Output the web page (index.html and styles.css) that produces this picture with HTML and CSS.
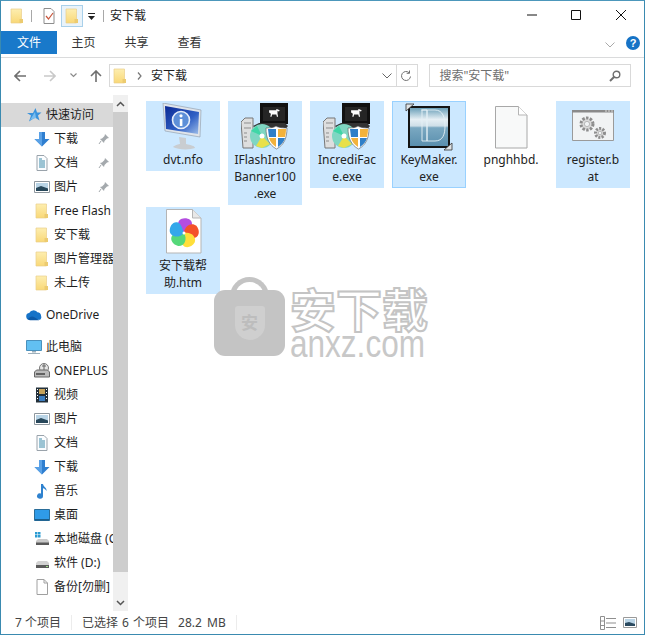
FILE: index.html
```html
<!DOCTYPE html>
<html lang="zh">
<head>
<meta charset="utf-8">
<title>安下载</title>
<link rel="stylesheet" href="styles.css">
</head>
<body>
<svg class="defs" width="0" height="0">
  <defs>
    <linearGradient id="fg" x1="0" y1="0" x2="0" y2="1"><stop offset="0" stop-color="#fdeeb0"/><stop offset="1" stop-color="#f9d877"/></linearGradient>
    <linearGradient id="mon" x1="0" y1="0" x2="1" y2="1"><stop offset="0" stop-color="#0b2a95"/><stop offset=".6" stop-color="#2f5fc4"/><stop offset="1" stop-color="#9dbde9"/></linearGradient>
    <linearGradient id="key" x1="0" y1="0" x2="0" y2="1"><stop offset="0" stop-color="#6a9fb8"/><stop offset=".3" stop-color="#e6eff4"/><stop offset=".47" stop-color="#cfdfe8"/><stop offset=".52" stop-color="#7aa8c1"/><stop offset="1" stop-color="#5a8fae"/></linearGradient>
    <symbol id="folder" viewBox="0 0 16 16"><path d="M2 1h10.500v14H2z" fill="url(#fg)" stroke="#e9cf8b" stroke-width=".7"/><path d="M10.500 11h3.500v4h-3.500z" fill="#eccb70"/></symbol>
    <symbol id="down" viewBox="0 0 16 16"><path d="M5 1h6v7h4.500L8 15.500.5 8H5z" fill="#2f7fd0"/><path d="M5 1h3v14.500L.5 8H5z" fill="#5aa1e6"/></symbol>
    <symbol id="doc" viewBox="0 0 16 16"><path d="M3 .5h7l3 3v12H3z" fill="#fbfdff" stroke="#9aa3ab"/><path d="M5 4h3M5 6h6M5 8h6M5 10h6M5 12h6" stroke="#3d8aa8"/></symbol>
    <symbol id="pic" viewBox="0 0 16 16"><path d="M.5 2.500h15v11H.5z" fill="#fff" stroke="#8e979e"/><path d="M2 4h12v8H2z" fill="#b9d4e6"/><path d="M2 9l5-2 7 2.500V12H2z" fill="#27475a"/></symbol>
    <symbol id="pin" viewBox="0 0 12 12"><path d="M7 1l4 4-2 .500-2.500 2.500-.5 2-4-4 2-.5L6.500 3z" fill="#a4a9ad"/><path d="M3 8l-2 3" stroke="#a4a9ad"/></symbol>
    <symbol id="star" viewBox="0 0 16 16"><path d="M9.500 1l1.500 4.500h4.500L12 8.500l1.500 5-4.500-3-6 4 2-6L1 6h6z" fill="#3a93dc"/><path d="M4 13l5-8 1 6z" fill="#79bdef"/></symbol>
    <symbol id="cloud" viewBox="0 0 17 16"><path d="M4 13a3.500 3.500 0 0 1-.5-7A5 5 0 0 1 12 5a3.800 3.800 0 0 1 4 4 3.500 3.500 0 0 1-1 4z" fill="#1673c8"/><path d="M2 12.500c2-3 5-3.500 7-2l5 3H4z" fill="#0d5aa8"/></symbol>
    <symbol id="pc" viewBox="0 0 16 16"><path d="M.5 1.500h15v10H.5z" fill="#62c0f2" stroke="#4a91bd"/><path d="M6 12h4v1.500H6zM2 14h12v1H2z" fill="#9eb0bc"/></symbol>
    <symbol id="usb" viewBox="0 0 16 16"><circle cx="10" cy="5" r="4.500" fill="#e6e6e6" stroke="#777"/><path d="M8 3h4M10 1v8" stroke="#666"/><path d="M.5 9l2-2h11l2 2v5H.5z" fill="#bcbcbc" stroke="#666"/><path d="M2 11h9" stroke="#444" stroke-width="1.500"/></symbol>
    <symbol id="film" viewBox="0 0 16 16"><path d="M2 .5h12v15H2z" fill="#23303a"/><path d="M5 2h6v5H5z" fill="#c7a35a"/><path d="M5 9h6v5H5z" fill="#3e7fc1"/><path d="M3 2h1v1H3zM3 5h1v1H3zM3 8h1v1H3zM3 11h1v1H3zM12 2h1v1h-1zM12 5h1v1h-1zM12 8h1v1h-1zM12 11h1v1h-1z" fill="#fff"/></symbol>
    <symbol id="music" viewBox="0 0 16 16"><path d="M7 1h2c.5 3 4 3.500 3.500 7-.8-1.500-2-2.500-3.500-2.800V13a3 2.700 0 1 1-2-2.500z" fill="#2f82cf"/></symbol>
    <symbol id="desk" viewBox="0 0 16 16"><path d="M.5 2.500h15v11H.5z" fill="#2f9be8" stroke="#2a6d99"/><path d="M1 12h14v1.500H1z" fill="#1b5f8d"/></symbol>
    <symbol id="sys" viewBox="0 0 16 16"><path d="M1 1h2.500v2.500H1zM4 1h2.500v2.500H4zM1 4h2.500v2.500H1zM4 4h2.500v2.500H4z" fill="#2b9bd2"/><path d="M2 10l2-2h9l2 2v4H2z" fill="#c9c9c9"/><path d="M2 11.500h13V14H2z" fill="#5a5a5a"/></symbol>
    <symbol id="disk" viewBox="0 0 16 16"><path d="M2 8l2-2h9l2 2v2H2z" fill="#d2d2d2"/><path d="M2 10h13v3H2z" fill="#5a5a5a"/><path d="M12 11h2v1h-2z" fill="#9fe08a"/></symbol>
    <symbol id="blank" viewBox="0 0 16 16"><path d="M3 .5h7l3.500 3.500v11.500H3z" fill="#fff" stroke="#a0a0a0"/><path d="M10 .5V4h3.500" fill="none" stroke="#a0a0a0"/></symbol>
    <symbol id="installer" viewBox="0 0 48 48">
      <path d="M0 19l4-4h8v30H2z" fill="#dedede" stroke="#777"/>
      <path d="M3 20h7M3 25h7M3 30h3M3 34h3M3 38h3" stroke="#8d8d8d"/>
      <path d="M19 0h28v21H19z" fill="#111"/><path d="M22 4h22v14H22z" fill="#252525"/>
      <path d="M26 7h12v-2l3 1 3 2-2 1-2-1v5l1 5h-2l-1-4h-7l-1 4h-2l1-5-3-2z" fill="#fff" transform="translate(12.500 3) scale(.6)"/>
      <path d="M12 23l6-3h26l3 3-4 5H18z" fill="#333"/>
      <circle cx="21" cy="33" r="12" fill="#7fd6c2"/><path d="M21 33l-11-5 6-5z" fill="#3fd6a6"/><path d="M21 33l8 8-8 4-6-2z" fill="#e8e04a"/><circle cx="21" cy="33" r="2.500" fill="#fff"/>
      <path d="M25 25c6 0 9-1 10-2 1 1 5 2 11 2 0 10-3 17-10.500 21C28 42 25 35 25 25z" fill="#fff" stroke="#555" stroke-width=".6"/>
      <path d="M37 26h8c0 3-.5 6-1 8h-7zM28 35h7v9c-3-2-6-5-7-9z" fill="#f2b23c"/><path d="M27 26h8v8h-7zM37 35h7c-1 4-4 7-7 9z" fill="#2f7fc8"/>
    </symbol>
  </defs>
</svg>
<div class="window">
  <header class="titlebar">
    <svg class="ic16 q1"><use href="#folder"/></svg>
    <span class="qsep"></span>
    <svg class="ic16 q2" viewBox="0 0 16 16"><path d="M3 .5h7l3 3v12H3z" fill="#fff" stroke="#8d8d8d"/><path d="M5 8l2.500 3L12 5" fill="none" stroke="#c8563c" stroke-width="1.200"/></svg>
    <span class="qsel"><svg class="ic16"><use href="#folder"/></svg></span>
    <svg class="qdrop" viewBox="0 0 7 7"><path d="M0 0h7v1H0zM0 3h7L3.500 7z" fill="#222"/></svg>
    <span class="qsep q3"></span>
    <span class="title">安下载</span>
    <div class="winbtns">
      <svg class="wb" viewBox="0 0 12 12"><path d="M1 6h10" stroke="#111"/></svg>
      <svg class="wb" viewBox="0 0 12 12"><path d="M1.500 1.500h9v9h-9z" fill="none" stroke="#111"/></svg>
      <svg class="wb" viewBox="0 0 12 12"><path d="M1 1l10 10M11 1L1 11" stroke="#111"/></svg>
    </div>
  </header>
  <nav class="ribbon">
    <span class="tab tab-file">文件</span>
    <span class="tab">主页</span>
    <span class="tab">共享</span>
    <span class="tab">查看</span>
    <svg class="rib-chev" viewBox="0 0 10 6"><path d="M.5.500L5 5 9.500.5" fill="none" stroke="#a9a9a9"/></svg>
    <span class="help">?</span>
  </nav>
  <div class="addrbar">
    <svg class="nav-ic back" viewBox="0 0 12 12"><path d="M6 1L1 6l5 5M1 6h11" fill="none" stroke="#6f6f6f" stroke-width="1.600"/></svg>
    <svg class="nav-ic fwd" viewBox="0 0 12 12"><path d="M6 1l5 5-5 5M11 6H0" fill="none" stroke="#c9c9c9" stroke-width="1.600"/></svg>
    <svg class="nav-chev" viewBox="0 0 7 5"><path d="M.5.500l3 3 3-3" fill="none" stroke="#8b8b8b" stroke-width="1.200"/></svg>
    <svg class="nav-ic up" viewBox="0 0 12 12"><path d="M1 6l5-5 5 5M6 1v11" fill="none" stroke="#6f6f6f" stroke-width="1.600"/></svg>
    <div class="addr">
      <svg class="ic16"><use href="#folder"/></svg>
      <svg class="crumb" viewBox="0 0 5 8"><path d="M1 .5L4 4 1 7.500" fill="none" stroke="#777" stroke-width="1.200"/></svg>
      <span class="addr-text">安下载</span>
      <svg class="addr-drop" viewBox="0 0 10 6"><path d="M.5.500L5 5 9.500.5" fill="none" stroke="#666"/></svg>
      <span class="addr-sep"></span>
      <svg class="refresh" viewBox="0 0 12 12"><path d="M10.500 6.500a4.500 4.500 0 1 1-1.300-3.700M9.500 .5v2.800H6.700" fill="none" stroke="#6f6f6f"/></svg>
    </div>
    <div class="search">
      <span class="search-text">搜索"安下载"</span>
      <svg class="mag" viewBox="0 0 12 12"><circle cx="7.500" cy="4.500" r="3.300" fill="none" stroke="#6f6f6f" stroke-width="1.400"/><path d="M5 7l-4 4" stroke="#6f6f6f" stroke-width="2"/></svg>
    </div>
  </div>
  <div class="body">
    <aside class="tree">
      <div class="row lvl1 active"><svg class="ic16"><use href="#star"/></svg><span class="name">快速访问</span></div>
      <div class="row lvl2"><svg class="ic16"><use href="#down"/></svg><span class="name">下载</span><svg class="pin"><use href="#pin"/></svg></div>
      <div class="row lvl2"><svg class="ic16"><use href="#doc"/></svg><span class="name">文档</span><svg class="pin"><use href="#pin"/></svg></div>
      <div class="row lvl2"><svg class="ic16"><use href="#pic"/></svg><span class="name">图片</span><svg class="pin"><use href="#pin"/></svg></div>
      <div class="row lvl2"><svg class="ic16"><use href="#folder"/></svg><span class="name">Free Flash</span></div>
      <div class="row lvl2"><svg class="ic16"><use href="#folder"/></svg><span class="name">安下载</span></div>
      <div class="row lvl2"><svg class="ic16"><use href="#folder"/></svg><span class="name">图片管理器</span></div>
      <div class="row lvl2"><svg class="ic16"><use href="#folder"/></svg><span class="name">未上传</span></div>
      <div class="row lvl1 group"><svg class="ic16"><use href="#cloud"/></svg><span class="name">OneDrive</span></div>
      <div class="row lvl1 group"><svg class="ic16"><use href="#pc"/></svg><span class="name">此电脑</span></div>
      <div class="row lvl2"><svg class="ic16"><use href="#usb"/></svg><span class="name">ONEPLUS</span></div>
      <div class="row lvl2"><svg class="ic16"><use href="#film"/></svg><span class="name">视频</span></div>
      <div class="row lvl2"><svg class="ic16"><use href="#pic"/></svg><span class="name">图片</span></div>
      <div class="row lvl2"><svg class="ic16"><use href="#doc"/></svg><span class="name">文档</span></div>
      <div class="row lvl2"><svg class="ic16"><use href="#down"/></svg><span class="name">下载</span></div>
      <div class="row lvl2"><svg class="ic16"><use href="#music"/></svg><span class="name">音乐</span></div>
      <div class="row lvl2"><svg class="ic16"><use href="#desk"/></svg><span class="name">桌面</span></div>
      <div class="row lvl2"><svg class="ic16"><use href="#sys"/></svg><span class="name">本地磁盘 (C:)</span></div>
      <div class="row lvl2"><svg class="ic16"><use href="#disk"/></svg><span class="name">软件 (D:)</span></div>
      <div class="row lvl2"><svg class="ic16"><use href="#blank"/></svg><span class="name">备份[勿删]</span></div>
    </aside>
    <div class="scrollbar">
      <svg class="sb-arrow" viewBox="0 0 9 6"><path d="M1 5l3.500-3.500L8 5" fill="none" stroke="#555" stroke-width="1.500"/></svg>
      <div class="sb-thumb"></div>
      <svg class="sb-arrow sb-end" viewBox="0 0 9 6"><path d="M1 1l3.500 3.500L8 1" fill="none" stroke="#555" stroke-width="1.500"/></svg>
    </div>
    <main class="files">
      <div class="file sel">
        <svg class="big" viewBox="0 0 48 48"><path d="M20 34l7 1v6c5 1 9 2 9 4-5 2-17 2-22-1 2-2 6-3 7-3z" fill="#c9cdd1"/><path d="M4 0l38 7-1 27-35-6z" fill="#dfe4ea" stroke="#8b98a8" stroke-width=".6"/><path d="M6 3l34 6-1 22-32-5z" fill="url(#mon)"/><circle cx="22" cy="17" r="8.500" fill="#5d8fd8" stroke="#e6eefa" stroke-width="1.600"/><rect x="20.800" y="16" width="2.600" height="7" fill="#fff"/><circle cx="22" cy="12.800" r="1.600" fill="#fff"/></svg>
        <span class="fname">dvt.nfo</span>
      </div>
      <div class="file sel">
        <svg class="big"><use href="#installer"/></svg>
        <span class="fname">IFlashIntro<br>Banner100<br>.exe</span>
      </div>
      <div class="file sel">
        <svg class="big"><use href="#installer"/></svg>
        <span class="fname">IncrediFac<br>e.exe</span>
      </div>
      <div class="file sel focus">
        <svg class="big" viewBox="0 0 48 48"><path d="M3 3h42v42H3z" fill="#141414"/><path d="M5 5h38v38H5z" fill="url(#key)"/><path d="M16 7h14c8 0 10 8 10 16s-2 15-10 15H22V7M17 7h5v31h-5z" fill="none" stroke="#e4f0f6" stroke-width=".9"/><path d="M1 8V1h8L1 8zM47 40v7h-8z" fill="#dfe3e6" stroke="#333" stroke-width=".8"/></svg>
        <span class="fname">KeyMaker.<br>exe</span>
      </div>
      <div class="file">
        <svg class="big" viewBox="0 0 48 48"><path d="M8.500 3.500h23l8.500 8.500v33H8.500z" fill="#f8f9f9" stroke="#a8a8a8"/><path d="M31.500 3.500V12H40" fill="#fff" stroke="#b5b5b5"/></svg>
        <span class="fname">pnghhbd.</span>
      </div>
      <div class="file sel">
        <svg class="big" viewBox="0 0 48 48"><path d="M3.500 7.500h41v30h-41z" fill="#f1f3f4" stroke="#9a9a9a"/><path d="M3 7h42v2.500H3z" fill="#8a8a8a"/><path d="M36 8h2M39 8h2M42 8h2" stroke="#d8d8d8"/><g fill="#dadada" stroke="#8d8d8d"><circle cx="18" cy="21" r="6" stroke-width="3" stroke-dasharray="2.400 1.400"/><circle cx="31" cy="30" r="4.500" stroke-width="3" stroke-dasharray="2 1.300"/></g><circle cx="18" cy="21" r="2.600" fill="#f1f3f4" stroke="#9a9a9a" stroke-width=".6"/><circle cx="31" cy="30" r="1.800" fill="#f1f3f4" stroke="#9a9a9a" stroke-width=".6"/></svg>
        <span class="fname">register.b<br>at</span>
      </div>
      <div class="file sel">
        <svg class="big" viewBox="0 0 48 48"><path d="M7.500 .5h26l8.500 8.500v35H7.500z" fill="#fff" stroke="#b5b5b5"/><path d="M33.500 .5V9H42" fill="#e8e8e8" stroke="#b5b5b5"/><g transform="translate(25 24)"><path id="blade-a" d="M0 0C-7-3-8-11-3-14 2-16 8-14 8-9 8-6 4-3 0 0z" fill="#b44de0"/><path d="M0 0C-7-3-8-11-3-14 2-16 8-14 8-9 8-6 4-3 0 0z" fill="#f4512a" transform="rotate(72)"/><path d="M0 0C-7-3-8-11-3-14 2-16 8-14 8-9 8-6 4-3 0 0z" fill="#ffdf3a" transform="rotate(144)"/><path d="M0 0C-7-3-8-11-3-14 2-16 8-14 8-9 8-6 4-3 0 0z" fill="#55d87a" transform="rotate(216)"/><path d="M0 0C-7-3-8-11-3-14 2-16 8-14 8-9 8-6 4-3 0 0z" fill="#34a7ea" transform="rotate(288)"/><circle r="1.500" fill="#fff"/></g></svg>
        <span class="fname">安下载帮<br>助.htm</span>
      </div>
    </main>
  </div>
  <footer class="status">
    <span class="st-count">7 个项目</span>
    <span class="st-sep"></span>
    <span class="st-sel">已选择 6 个项目</span>
    <span class="st-size">28.2 MB</span>
    <span class="st-sep"></span>
    <svg class="view" viewBox="0 0 16 14"><path d="M.5.500h4v13h-4zM.5 5h4M.5 9.500h4M6 2.500h10M6 7h10M6 11.500h10" fill="none" stroke="#8f8f8f"/></svg>
    <svg class="view view-thumb" viewBox="0 0 14 11"><path d="M.5.500h13v10H.5z" fill="#fff" stroke="#9a9a9a"/><path d="M2 2h10v7H2z" fill="#b9d4e6"/><path d="M2 6l4-1 6 2v2H2z" fill="#2b4a60"/></svg>
  </footer>
  <div class="watermark">
    <div class="wm-bag">
      <span class="wm-handle"></span>
      <span class="wm-body"><span class="wm-shield">安</span></span>
    </div>
    <div class="wm-text">
      <span class="wm-cn">安下载</span>
      <span class="wm-en">anxz.com</span>
    </div>
  </div>
</div>
</body>
</html>
```
FILE: styles.css
```css
* { box-sizing: border-box; }
html, body { margin: 0; padding: 0; }
body { width: 645px; height: 635px; overflow: hidden; background: #fff; font: 12px/16px "Noto Sans", "Noto Sans CJK SC", sans-serif; color: #1e1e1e; }
.defs { position: absolute; }
.window { position: relative; width: 645px; height: 635px; display: flex; flex-direction: column; border: 1px solid #3a8ab0; border-top-color: #4c97bb; background: #fff; overflow: hidden; }
.ic16 { width: 16px; height: 16px; flex: none; display: block; }

.titlebar { height: 30px; flex: none; display: flex; align-items: center; padding-left: 8px; }
.qsep { width: 1px; height: 12px; background: #a8a8a8; margin-left: 6px; }
.q2 { margin-left: 9px; }
.qsel { width: 22px; height: 22px; margin-left: 4px; display: flex; align-items: center; justify-content: center; background: #e9f3fa; border: 1px solid #a9d0ea; }
.qdrop { width: 7px; height: 7px; margin-left: 5px; }
.q3 { margin-left: 8px; }
.title { margin-left: 6px; font-size: 12px; }
.winbtns { margin-left: auto; margin-bottom: 2px; display: flex; }
.wb { width: 12px; height: 12px; margin: 0 17px; }
.wb:first-child { margin-right: 16px; }
.wb:nth-child(2) { margin: 0 16px; }
.wb:last-child { margin: 0 17px 0 17px; }

.ribbon { height: 27px; flex: none; display: flex; align-items: flex-start; border-bottom: 1px solid #dadbdc; padding-right: 4px; }
.tab { width: 53px; height: 23px; padding-top: 1px; display: flex; align-items: center; justify-content: center; color: #333; }
.tab-file { width: 56px; background: #1979ca; color: #fff; }
.rib-chev { width: 10px; height: 6px; margin: 11px 11px 0 auto; }
.help { width: 14px; height: 14px; margin-top: 5px; border-radius: 50%; background: #1673c6; color: #fff; font: bold 11px/14px "Liberation Sans", sans-serif; text-align: center; }

.addrbar { height: 37px; flex: none; display: flex; align-items: center; padding: 0 13px 2px 13px; }
.nav-ic { width: 12px; height: 12px; flex: none; }
.fwd { margin-left: 18px; }
.nav-chev { width: 7px; height: 5px; margin-left: 14px; flex: none; }
.up { margin-left: 13px; }
.addr { width: 310px; height: 23px; margin-left: 7px; display: flex; align-items: center; border: 1px solid #d9d9d9; padding-left: 2px; }
.crumb { width: 5px; height: 8px; margin-left: 9px; }
.addr-text { margin-left: 9px; }
.addr-drop { width: 10px; height: 6px; margin-left: auto; }
.addr-sep { width: 1px; height: 21px; background: #d9d9d9; margin-left: 4px; }
.refresh { width: 12px; height: 12px; margin: 0 5px 0 3px; }
.search { width: 202px; height: 23px; margin-left: 11px; display: flex; align-items: center; justify-content: space-between; border: 1px solid #d9d9d9; padding: 0 9px; color: #6f6f6f; }
.mag { width: 12px; height: 12px; }

.body { flex: 1; min-height: 0; display: flex; }
.tree { width: 112px; flex: none; padding-top: 8px; overflow: hidden; }
.row { height: 24px; display: flex; align-items: center; white-space: nowrap; }
.lvl1 { padding-left: 25px; }
.lvl2 { padding-left: 33px; }
.lvl1 .ic16 { margin-right: 4px; }
.lvl2 .ic16 { margin-right: 4px; }
.active { background: #d9d9d9; }
.group { margin-top: 8px; }
.name { flex: 1; min-width: 0; overflow: hidden; }
.pin { width: 12px; height: 12px; flex: none; margin-right: 3px; }

.scrollbar { width: 15px; flex: none; display: flex; flex-direction: column; align-items: center; background: #f0f0f0; padding-top: 6px; padding-bottom: 5px; }
.sb-arrow { width: 9px; height: 6px; flex: none; }
.sb-thumb { width: 15px; height: 460px; margin-top: 5px; background: #cdcdcd; flex: none; }
.sb-end { margin-top: auto; }

.files { flex: 1; min-width: 0; padding: 6px 0 0 18px; display: grid; grid-template-columns: repeat(6, 74px); column-gap: 8px; row-gap: 2px; align-content: start; align-items: start; }
.file { width: 74px; display: flex; flex-direction: column; align-items: center; padding: 2px 0 3px; text-align: center; }
.sel { background: #cce8ff; }
.focus { outline: 1px solid #99d1ff; outline-offset: -1px; }
.big { width: 48px; height: 48px; display: block; }
.fname { line-height: 17px; color: #222; }

.status { height: 23px; flex: none; display: flex; align-items: center; padding: 0 7px 0 14px; color: #444; }
.st-sep { width: 1px; height: 15px; background: #ececec; margin: 0 10px; }
.st-sel { word-spacing: 1px; }
.st-size { margin-left: 9px; word-spacing: 2px; }
.view { width: 16px; height: 14px; margin-left: auto; }
.view-thumb { width: 14px; height: 11px; margin-left: 7px; }

.watermark { position: absolute; left: 213px; top: 276px; display: flex; gap: 5px; pointer-events: none; }
.wm-bag { position: relative; width: 71px; height: 79px; }
.wm-handle { position: absolute; left: 16px; top: 0; width: 39px; height: 28px; border: 5px solid #c4c4c4; border-radius: 20px 20px 0 0; border-bottom: 0; }
.wm-body { position: absolute; left: 0; bottom: 0; width: 71px; height: 66px; border-radius: 11px; background: #c4c4c4; display: flex; align-items: center; justify-content: center; }
.wm-shield { width: 30px; height: 34px; background: #cfcfcf; border-radius: 3px 3px 15px 15px; color: #bdbdbd; font: bold 17px/32px "Noto Sans CJK SC", sans-serif; text-align: center; }
.wm-text { display: flex; flex-direction: column; width: 140px; padding-top: 7px; }
.wm-cn { font: bold 46px/47px "Noto Sans CJK SC", sans-serif; color: #fff; -webkit-text-stroke: 2px #c4c4c4; white-space: nowrap; }
.wm-en { display: block; font: 38px/26px "Liberation Sans", sans-serif; color: #c8c8c8; white-space: nowrap; transform: scaleX(.83); transform-origin: left center; }
```
